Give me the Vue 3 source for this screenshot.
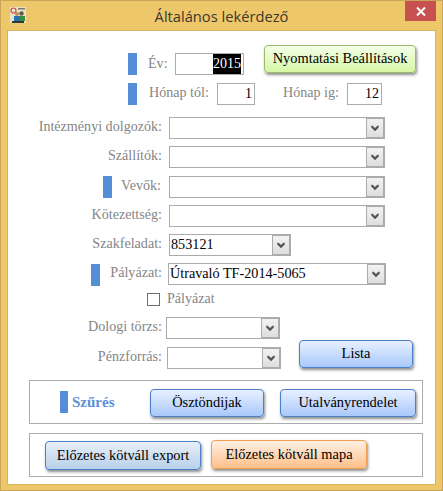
<script setup>
const chev = 'M4.5 5.5 L6 5.5 L8.5 8 L11 5.5 L12.5 5.5 L12.5 7.5 L8.5 11.5 L4.5 7.5 Z'
</script>

<template>
  <div class="window">
    <header class="titlebar">
      <div class="tb-left">
        <svg class="appicon" width="16" height="16" viewBox="0 0 16 16">
          <rect width="16" height="16" fill="#e8e2c8" />
          <circle cx="3.5" cy="3.5" r="2.5" fill="none" stroke="#d8453a" stroke-width="1.2" />
          <rect x="8" y="1" width="7" height="1.5" fill="#777" />
          <circle cx="7" cy="7" r="2" fill="#b88f63" />
          <circle cx="11.5" cy="6.5" r="2.2" fill="#5d5a48" />
          <rect x="4" y="9" width="6" height="5" fill="#2a6fb0" />
          <rect x="10" y="9" width="5" height="5" fill="#3d8a45" />
          <rect x="2" y="14" width="12" height="2" fill="#2d3d35" />
        </svg>
      </div>
      <h1 class="title">Általános lekérdező</h1>
      <div class="tb-right">
        <button class="close" aria-label="Bezárás">
          <svg width="10" height="9" viewBox="0 0 10 9">
            <path d="M1 0.5 L9 8.5 M9 0.5 L1 8.5" stroke="#fff" stroke-width="2" fill="none" />
          </svg>
        </button>
      </div>
    </header>

    <main class="panel">
      <div class="row r-year">
        <span class="bar"></span>
        <label class="t l-ev">Év:</label>
        <div class="box w-year"><span class="sel">2015</span></div>
        <button class="btn green b-print">Nyomtatási Beállítások</button>
      </div>

      <div class="row r-month">
        <span class="bar"></span>
        <label class="t l-tol">Hónap tól:</label>
        <div class="box w-tol">1</div>
        <label class="t l-ig">Hónap ig:</label>
        <div class="box w-ig">12</div>
      </div>

      <div class="row r-a">
        <div class="cell"><label class="t">Intézményi dolgozók:</label></div>
        <div class="combo w-full"><span class="val"></span><span class="arrow"><svg width="17" height="17" viewBox="0 0 17 17"><path :d="chev" /></svg></span></div>
      </div>
      <div class="row r-b">
        <div class="cell"><label class="t">Szállítók:</label></div>
        <div class="combo w-full"><span class="val"></span><span class="arrow"><svg width="17" height="17" viewBox="0 0 17 17"><path :d="chev" /></svg></span></div>
      </div>
      <div class="row r-c">
        <div class="cell"><span class="bar bar-v"></span><label class="t t-nudge">Vevők:</label></div>
        <div class="combo w-full"><span class="val"></span><span class="arrow"><svg width="17" height="17" viewBox="0 0 17 17"><path :d="chev" /></svg></span></div>
      </div>
      <div class="row r-b">
        <div class="cell"><label class="t">Kötezettség:</label></div>
        <div class="combo w-full"><span class="val"></span><span class="arrow"><svg width="17" height="17" viewBox="0 0 17 17"><path :d="chev" /></svg></span></div>
      </div>
      <div class="row r-b">
        <div class="cell"><label class="t">Szakfeladat:</label></div>
        <div class="combo w-szak"><span class="val">853121</span><span class="arrow"><svg width="17" height="17" viewBox="0 0 17 17"><path :d="chev" /></svg></span></div>
      </div>
      <div class="row r-b">
        <div class="cell"><span class="bar bar-p"></span><label class="t">Pályázat:</label></div>
        <div class="combo w-pal"><span class="val">Útravaló TF-2014-5065</span><span class="arrow"><svg width="17" height="17" viewBox="0 0 17 17"><path :d="chev" /></svg></span></div>
      </div>

      <div class="row r-check">
        <span class="check"></span>
        <label class="t">Pályázat</label>
      </div>

      <div class="row r-dologi">
        <div class="cell"><label class="t">Dologi törzs:</label></div>
        <div class="combo w-dologi"><span class="val"></span><span class="arrow"><svg width="17" height="17" viewBox="0 0 17 17"><path :d="chev" /></svg></span></div>
      </div>
      <div class="row r-penz">
        <div class="cell"><label class="t">Pénzforrás:</label></div>
        <div class="combo w-penz"><span class="val"></span><span class="arrow"><svg width="17" height="17" viewBox="0 0 17 17"><path :d="chev" /></svg></span></div>
        <button class="btn blue b-lista">Lista</button>
      </div>

      <section class="group g1">
        <span class="bar bar-s"></span>
        <strong class="szures">Szűrés</strong>
        <button class="btn blue b-oszt">Ösztöndijak</button>
        <button class="btn blue b-utal">Utalványrendelet</button>
      </section>

      <section class="group g2">
        <button class="btn steel b-exp">Előzetes kötváll export</button>
        <button class="btn orange b-map">Előzetes kötváll mapa</button>
      </section>
    </main>
  </div>
</template>

<style>
html, body { margin: 0; padding: 0; background: #efc76b; }
</style>

<style scoped>
.window {
  box-sizing: border-box;
  width: 443px;
  height: 491px;
  background: #efc76b;
  border: 1px solid #c8a658;
  font-family: "Liberation Serif", serif;
  overflow: hidden;
}
.titlebar {
  display: grid;
  grid-template-columns: 1fr auto 1fr;
  height: 29px;
}
.tb-left { padding: 6px 0 0 9px; }
.appicon { display: block; }
.title {
  margin: 0;
  padding-top: 5px;
  font: 400 14.7px/20px "Open Sans", sans-serif;
  color: #3b382c;
}
.tb-right { display: flex; justify-content: flex-end; align-items: flex-start; padding-right: 6px; }
.close {
  width: 31px;
  height: 20px;
  padding: 0;
  border: 0;
  background: #c75050;
  display: flex;
  align-items: center;
  justify-content: center;
}
.panel {
  box-sizing: border-box;
  width: 429px;
  height: 455px;
  margin-left: 6px;
  background: #fff;
  border: 1px solid #d6b45d;
  overflow: hidden;
}
.row { display: flex; align-items: center; height: 22px; }
.t { font-size: 14.1px; line-height: 18px; color: #858585; white-space: nowrap; }
.bar { flex: none; width: 9px; height: 22px; background: #548dd8; }
.box {
  box-sizing: border-box;
  height: 22px;
  border: 1px solid #ababab;
  background: #fff;
  font-size: 14px;
  line-height: 20px;
  text-align: right;
  padding-right: 2px;
  color: #000;
}
.sel { display: inline-block; background: #000; color: #fff; height: 20px; }

.r-year { height: 30px; align-items: flex-end; margin-top: 14px; padding-left: 120px; }
.l-ev { width: 27px; margin-left: 11px; padding-bottom: 3px; }
.w-year { width: 69px; }
.b-print { width: 152px; height: 28px; margin-left: 20px; margin-bottom: 2px; }

.r-month { margin-top: 8px; padding-left: 120px; }
.l-tol { width: 68px; margin-left: 12px; margin-top: -5px; }
.w-tol { width: 38px; }
.l-ig { width: 64px; margin-left: 28px; margin-top: -5px; }
.w-ig { width: 35px; }

.cell {
  box-sizing: border-box;
  width: 154px;
  display: flex;
  justify-content: flex-end;
  align-items: center;
  margin-right: 7px;
}
.cell .t { margin-top: -4px; }
.t-nudge { margin-right: 1px; }
.bar-v { margin-right: 9px; margin-top: -1px; }
.bar-p { margin-right: 10px; margin-top: 1px; }

.r-a { margin-top: 12px; }
.r-b { margin-top: 7px; }
.r-c { margin-top: 8px; }

.combo {
  box-sizing: border-box;
  height: 22px;
  border: 1px solid #ababab;
  display: flex;
  background: #fff;
}
.val { flex: 1; font-size: 14.2px; line-height: 19px; padding-left: 1px; color: #000; white-space: nowrap; }
.arrow {
  box-sizing: border-box;
  flex: none;
  width: 18px;
  border: 1px solid #ababab;
  background: linear-gradient(#f2f2f2, #dedede);
  display: flex;
  align-items: center;
  justify-content: center;
}
.arrow svg { display: block; }
.arrow path { fill: #555; }
.w-full { width: 216px; }
.w-szak { width: 122px; }
.w-pal { width: 218px; margin-left: -1px; }

.r-check { margin-top: 8px; height: 13px; padding-left: 139px; }
.check { box-sizing: border-box; width: 13px; height: 13px; border: 1px solid #707070; background: #fff; margin-right: 7px; }
.r-check .t { margin-top: -4px; }

.r-dologi { margin-top: 11px; }
.w-dologi { width: 114px; margin-left: -3px; }
.r-penz { height: 29px; align-items: flex-end; margin-top: 1px; }
.r-penz .cell { height: 22px; }
.w-penz { width: 114px; margin-left: -2px; }
.b-lista { width: 114px; height: 28px; margin-left: 18px; margin-bottom: 1px; }

.btn {
  box-sizing: border-box;
  padding: 0 0 2px;
  border: 1px solid #4a80c8;
  border-radius: 4px;
  font: 14.4px/18px "Liberation Serif", serif;
  color: #000;
  white-space: nowrap;
  box-shadow: 1px 2px 3px rgba(0, 0, 0, 0.45);
}
.blue { background: linear-gradient(#e8f0ff, #a8c8fb); }
.green { background: linear-gradient(#f4ffe8, #d6f7a6); border-color: #9cbc6a; }
.steel { background: linear-gradient(#e8eff8, #b8d0ea); }
.orange { background: linear-gradient(#fff0e4, #ffc08a); border-color: #f0a050; }

.group {
  box-sizing: border-box;
  width: 394px;
  height: 44px;
  margin-left: 21px;
  border: 1px solid #ababab;
  display: flex;
  align-items: flex-start;
}
.g1 { margin-top: 11px; padding: 8px 0 0 30px; }
.g2 { margin-top: 9px; padding: 6px 0 0 15px; }
.bar-s { width: 8px; margin-top: 2px; }
.szures {
  width: 78px;
  margin-left: 4px;
  margin-top: 4px;
  font-size: 15px;
  line-height: 18px;
  color: #5b8fdb;
}
.b-oszt { width: 114px; height: 28px; }
.b-utal { width: 136px; height: 28px; margin-left: 16px; }
.b-exp { width: 156px; height: 29px; margin-top: 1px; }
.b-map { width: 156px; height: 29px; margin-left: 10px; }
</style>
